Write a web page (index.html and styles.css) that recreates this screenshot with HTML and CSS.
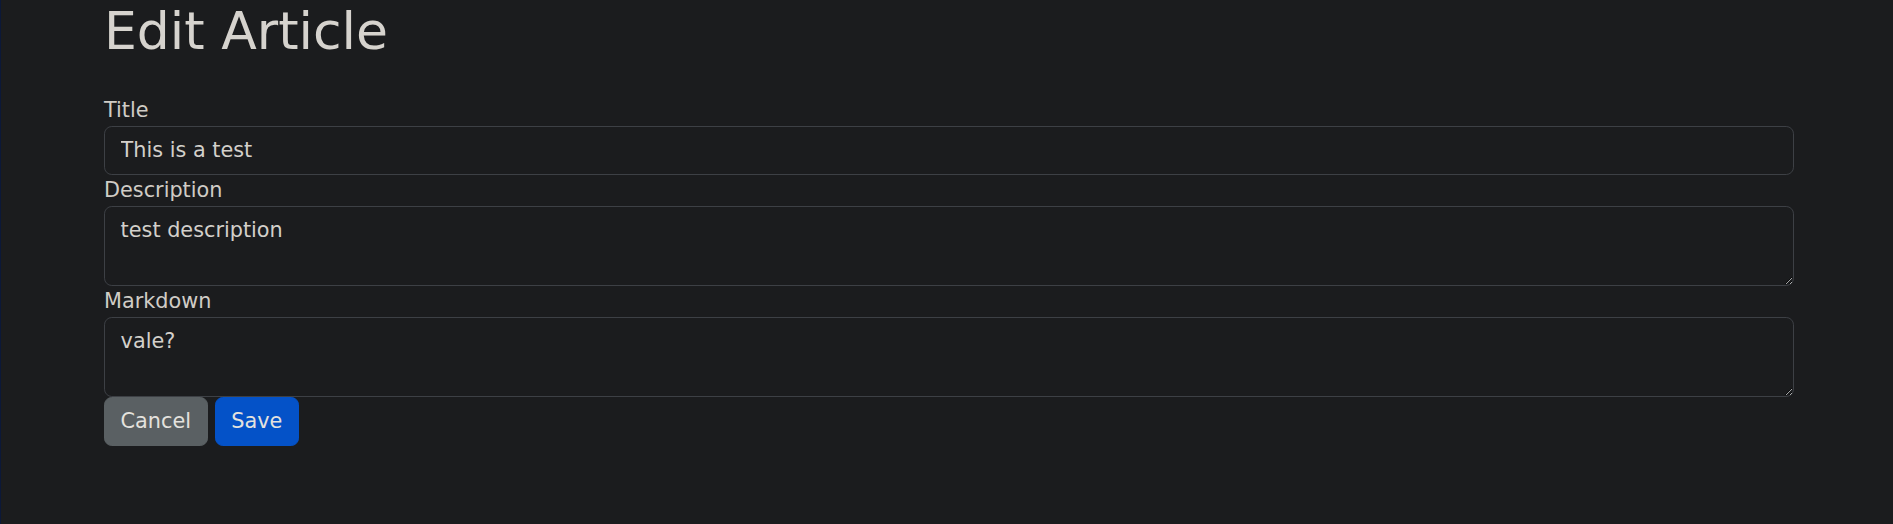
FILE: index.html
```html
<!DOCTYPE html>
<html lang="en">
<head>
<meta charset="utf-8">
<title>Edit Article</title>
<link rel="stylesheet" href="styles.css">
</head>
<body>
<main class="container">
  <h1 class="page-title">Edit Article</h1>
  <form class="article-form">
    <label class="form-label" for="title">Title</label>
    <input class="form-control" id="title" type="text" value="This is a test">
    <label class="form-label" for="description">Description</label>
    <textarea class="form-control" id="description" rows="2">test description</textarea>
    <label class="form-label" for="markdown">Markdown</label>
    <textarea class="form-control" id="markdown" rows="2">vale?</textarea>
    <div class="actions">
      <button type="button" class="btn btn-secondary">Cancel</button>
      <button type="submit" class="btn btn-primary">Save</button>
    </div>
  </form>
</main>
</body>
</html>
```
FILE: styles.css
```css
html {
  font-size: 20.8px;
  color-scheme: dark;
}
* { box-sizing: border-box; }
body {
  margin: 0;
  min-height: 524px;
  background: #1b1c1e;
  color: #d3d0cb;
  font-family: "DejaVu Sans", sans-serif;
  font-size: 1rem;
  line-height: 1.5;
  border-left: 1px solid #0c1838;
}
.container {
  padding: 0 99px 0 103px;
}
.page-title {
  margin: 0 0 0.5rem;
  font-size: 2.5rem;
  font-weight: 500;
  line-height: 1.2;
  color: #d6d3ce;
}
.article-form {
  display: flex;
  flex-direction: column;
  margin-top: calc(1.5rem + 1.5px);
}
.form-label {
  display: block;
  color: #d0ccc6;
}
.form-control {
  display: block;
  width: 100%;
  padding: 0.375rem 0.75rem;
  font-family: inherit;
  font-size: 1rem;
  line-height: 1.5;
  color: #d3d0cb;
  background: #1b1c1e;
  border: 1px solid #3d4045;
  border-radius: 0.375rem;
  outline: none;
  margin: 0;
}
textarea.form-control {
  resize: vertical;
  height: calc(3rem + 0.75rem + 2px);
}
.actions {
  display: flex;
  gap: 7px;
}
.btn {
  font-family: inherit;
  font-size: 1rem;
  line-height: 1.5;
  padding: 0.375rem 0.75rem;
  border: 1px solid transparent;
  border-radius: 0.375rem;
  color: #e4e2de;
  cursor: pointer;
}
.btn-secondary {
  background: #5a6063;
  border-color: #5a6063;
}
.btn-primary {
  background: #0452c8;
  border-color: #0452c8;
}
```
